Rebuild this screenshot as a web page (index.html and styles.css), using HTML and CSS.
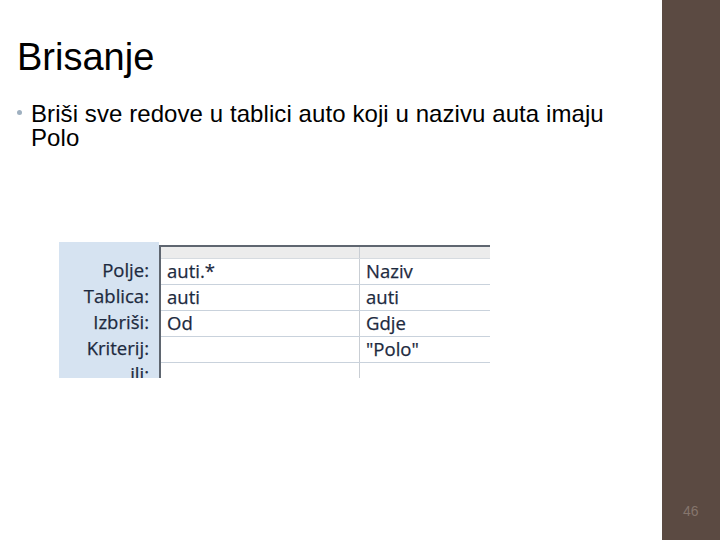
FILE: index.html
```html
<!DOCTYPE html>
<html>
<head>
<meta charset="utf-8">
<link rel="stylesheet" href="styles.css">
</head>
<body>
<div class="slide">
  <main class="content">
    <h1 class="title">Brisanje</h1>
    <ul class="bullets">
      <li>Briši sve redove u tablici auto koji u nazivu auta imaju Polo</li>
    </ul>
    <div class="query">
      <div class="labels">
        <div class="label">Polje:</div>
        <div class="label">Tablica:</div>
        <div class="label">Izbriši:</div>
        <div class="label">Kriterij:</div>
        <div class="label">ili:</div>
      </div>
      <div class="grid">
        <div class="row head"><div class="cell c1"></div><div class="cell c2"></div></div>
        <div class="row"><div class="cell c1">auti.*</div><div class="cell c2">Naziv</div></div>
        <div class="row"><div class="cell c1">auti</div><div class="cell c2">auti</div></div>
        <div class="row"><div class="cell c1">Od</div><div class="cell c2">Gdje</div></div>
        <div class="row"><div class="cell c1"></div><div class="cell c2">"Polo"</div></div>
        <div class="row"><div class="cell c1"></div><div class="cell c2"></div></div>
      </div>
    </div>
  </main>
  <aside class="side"><span class="pagenum">46</span></aside>
</div>
</body>
</html>
```
FILE: styles.css
```css
html, body {
  margin: 0;
  padding: 0;
  background: #ffffff;
}
.slide {
  width: 720px;
  height: 540px;
  display: flex;
  overflow: hidden;
  font-family: "Liberation Sans", Arial, sans-serif;
}
.content {
  flex: 1;
  position: relative;
}
.title {
  margin: 0;
  padding: 35px 0 0 17px;
  font-size: 38px;
  font-weight: normal;
  line-height: 44px;
  color: #000;
}
.bullets {
  list-style: none;
  margin: 0;
  padding: 23px 0 0 31px;
}
.bullets li {
  position: relative;
  font-size: 24px;
  line-height: 24px;
  color: #000;
  width: 600px;
  letter-spacing: 0.08px;
}
.bullets li::before {
  content: "";
  position: absolute;
  left: -14px;
  top: 8px;
  width: 5px;
  height: 5px;
  border-radius: 50%;
  background: #9fb0c0;
}
.query {
  margin: 92px 0 0 59px;
  width: 431px;
  height: 136px;
  display: flex;
  overflow: hidden;
  font-family: "Open Sans", "Noto Sans", sans-serif;
  font-size: 18.5px;
  color: #1d2a40;
  -webkit-text-stroke: 0.25px #1d2a40;
}
.labels {
  width: 100px;
  background: #d6e3f1;
  padding-top: 16px;
  box-sizing: border-box;
}
.label {
  height: 26px;
  line-height: 26px;
  text-align: right;
  padding-right: 10px;
  box-sizing: border-box;
  margin-top: -1px;
  margin-bottom: 1px;
}
.grid {
  flex: 1;
  margin-top: 3px;
  border-top: 2px solid #5f6670;
  border-left: 2px solid #5f6670;
  background: #fff;
}
.row {
  display: flex;
  height: 26px;
  border-bottom: 1px solid #c9d2dc;
  box-sizing: border-box;
}
.row.head {
  height: 12px;
  background: #ececec;
  border-bottom: 1px solid #d6dbe0;
}
.cell {
  line-height: 24px;
  padding-left: 6px;
  box-sizing: border-box;
  white-space: nowrap;
}
.c1 {
  width: 199px;
  border-right: 1px solid #c9ced4;
}
.c2 {
  flex: 1;
}
.side {
  width: 58px;
  background: #5b4a42;
  position: relative;
}
.pagenum {
  position: absolute;
  left: 21px;
  top: 503px;
  font-size: 14px;
  color: #85756c;
}
```
